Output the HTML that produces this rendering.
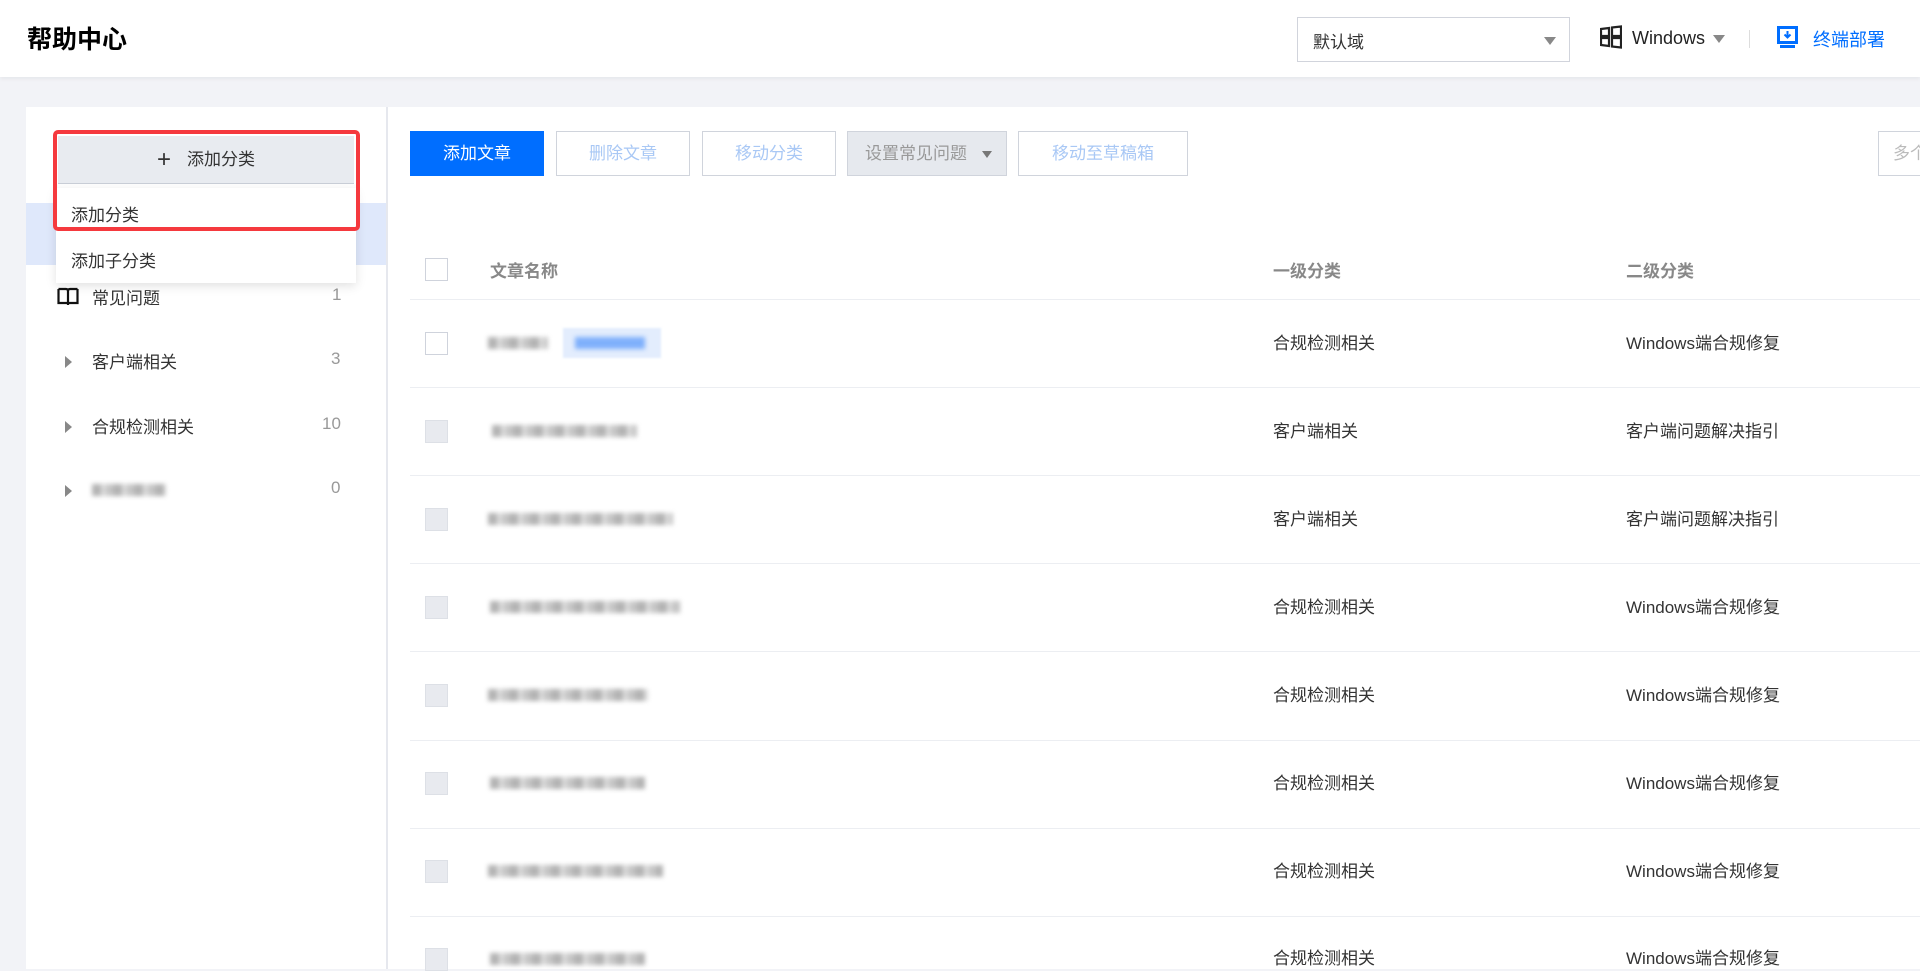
<!DOCTYPE html>
<html><head><meta charset="utf-8"><style>
*{box-sizing:border-box;margin:0;padding:0}
body{width:1920px;height:969px;overflow:hidden;background:#f2f3f7;font-family:"Liberation Sans","Noto Sans CJK SC",sans-serif;color:#333;font-size:17px;position:relative}
.abs{position:absolute}
.hdr{left:0;top:0;width:1920px;height:77px;background:#fff;box-shadow:0 2px 4px rgba(0,0,0,.05)}
.title{left:27px;top:20px;font-size:25px;font-weight:bold;color:#000}
.sel{left:1297px;top:17px;width:273px;height:45px;border:1px solid #d1d4dc;background:#fff}
.sel span{position:absolute;left:15px;top:10px}
.caret{width:0;height:0;border-left:6px solid transparent;border-right:6px solid transparent;border-top:8px solid #888}
.left{left:26px;top:107px;width:360px;height:862px;background:#fff}
.main{left:388px;top:107px;width:1532px;height:862px;background:#fff}
.vline{left:386px;top:107px;width:2px;height:862px;background:#e6e8ee}
.btn{top:131px;height:45px;border:1px solid #d0d4dc;background:#fff;color:#a9c8f5;text-align:center;line-height:43px;font-size:17px}
.cb{width:23px;height:23px;border:1px solid #cfd3dc;background:#fff}
.cbg{background:#e8eaef;border-color:#dde0e6}
.rowline{left:410px;width:1510px;height:1px;background:#eceef2}
.blur{filter:blur(2.5px);background:repeating-linear-gradient(90deg,#9a9a9a 0 9px,#cfcfcf 9px 14px,#b3b3b3 14px 21px);height:12px;opacity:.75}
.tx{font-size:17px;color:#333}
.tri{width:0;height:0;border-top:6px solid transparent;border-bottom:6px solid transparent;border-left:7px solid #888}
.cnt{color:#999;font-size:17px}
</style></head><body>
<div class="abs hdr"></div>
<div class="abs title">帮助中心</div>
<div class="abs sel"><span>默认域</span><div class="abs caret" style="left:246px;top:19px"></div></div>
<svg class="abs" style="left:1600px;top:25px" width="22" height="24" viewBox="0 0 22 24"><g fill="none" stroke="#222" stroke-width="2.2"><path d="M1 4 L9 3 V11 H1 Z"/><path d="M12 2.5 L21 1.5 V11 H12 Z"/><path d="M1 13 H9 V21 L1 20 Z"/><path d="M12 13 H21 V22.5 L12 21.5 Z"/></g></svg>
<div class="abs" style="left:1632px;top:28px;font-size:18px;color:#222">Windows</div>
<div class="abs caret" style="left:1713px;top:35px"></div>
<div class="abs" style="left:1749px;top:30px;width:1px;height:18px;background:#ddd"></div>
<svg class="abs" style="left:1777px;top:26px" width="21" height="22" viewBox="0 0 21 22"><rect x="1.5" y="1.5" width="18" height="15" fill="none" stroke="#006eff" stroke-width="3"/><rect x="3" y="19" width="15" height="3" fill="#006eff"/><path d="M10.5 5 V11 M7.5 8.5 L10.5 11.5 L13.5 8.5" stroke="#006eff" stroke-width="2" fill="none"/></svg>
<div class="abs" style="left:1813px;top:26px;color:#006eff;font-size:18px">终端部署</div>

<div class="abs left"></div>
<div class="abs vline"></div>
<div class="abs main"></div>

<div class="abs" style="left:26px;top:203px;width:360px;height:62px;background:#dfe8fb"></div>
<svg class="abs" style="left:57px;top:287px" width="22" height="20" viewBox="0 0 22 20"><path d="M1.5 2 H9 Q11 2 11 4 V18 M20.5 2 H13 Q11 2 11 4 M1.5 2 V16 H11 H20.5 V2" fill="none" stroke="#111" stroke-width="2.2"/></svg>
<div class="abs tx" style="left:92px;top:284px">常见问题</div><div class="abs cnt" style="left:332px;top:285px">1</div>
<div class="abs tri" style="left:65px;top:356px"></div>
<div class="abs tx" style="left:92px;top:348px">客户端相关</div><div class="abs cnt" style="left:331px;top:349px">3</div>
<div class="abs tri" style="left:65px;top:421px"></div>
<div class="abs tx" style="left:92px;top:413px">合规检测相关</div><div class="abs cnt" style="left:322px;top:414px">10</div>
<div class="abs tri" style="left:65px;top:485px"></div>
<div class="abs blur" style="left:92px;top:484px;width:74px"></div><div class="abs cnt" style="left:331px;top:478px">0</div>

<div class="abs" style="left:56px;top:188px;width:300px;height:95px;background:#fff;box-shadow:0 3px 10px rgba(0,0,0,.12)"></div>
<div class="abs tx" style="left:71px;top:201px">添加分类</div>
<div class="abs tx" style="left:71px;top:247px">添加子分类</div>
<div class="abs" style="left:58px;top:136px;width:296px;height:48px;background:#e8ebf0;border-bottom:1px solid #c8cdd6;text-align:center;line-height:47px;font-size:17px;color:#333"><span style="font-size:24px;vertical-align:-2px;margin-right:16px">+</span>添加分类</div>
<div class="abs" style="left:53px;top:130px;width:307px;height:101px;border:4px solid #f5393e;border-radius:5px"></div>

<div class="abs btn" style="left:410px;width:134px;background:#006eff;border-color:#006eff;color:#fff">添加文章</div>
<div class="abs btn" style="left:556px;width:134px">删除文章</div>
<div class="abs btn" style="left:702px;width:134px">移动分类</div>
<div class="abs btn" style="left:847px;width:160px;background:#e6e9ee;color:#999;text-align:left;padding-left:17px">设置常见问题<div class="abs caret" style="left:134px;top:19px;border-left-width:5px;border-right-width:5px;border-top-width:7px;border-top-color:#777"></div></div>
<div class="abs btn" style="left:1018px;width:170px">移动至草稿箱</div>
<div class="abs btn" style="left:1878px;width:60px;color:#bbb;text-align:left;padding-left:14px">多个</div>

<div class="abs cb" style="left:425px;top:258px"></div>
<div class="abs" style="left:490px;top:257px;color:#888;font-weight:bold;font-size:17px">文章名称</div>
<div class="abs" style="left:1273px;top:257px;color:#888;font-weight:bold;font-size:17px">一级分类</div>
<div class="abs" style="left:1626px;top:257px;color:#888;font-weight:bold;font-size:17px">二级分类</div>
<div class="abs rowline" style="top:299px"></div>

<div class="abs cb" style="left:425px;top:332px"></div>
<div class="abs blur" style="left:488px;top:337px;width:60px"></div>
<div class="abs" style="left:563px;top:328px;width:98px;height:30px;background:#e3edfd;filter:blur(1px)"></div>
<div class="abs" style="left:575px;top:337px;width:70px;height:12px;background:#7fb0fb;filter:blur(2.5px)"></div>
<div class="abs tx" style="left:1273px;top:329px">合规检测相关</div><div class="abs tx" style="left:1626px;top:329px">Windows端合规修复</div>
<div class="abs rowline" style="top:387px"></div>

<div class="abs cb cbg" style="left:425px;top:420px"></div><div class="abs blur" style="left:492px;top:425px;width:145px"></div>
<div class="abs tx" style="left:1273px;top:417px">客户端相关</div><div class="abs tx" style="left:1626px;top:417px">客户端问题解决指引</div>
<div class="abs rowline" style="top:475px"></div>

<div class="abs cb cbg" style="left:425px;top:508px"></div><div class="abs blur" style="left:488px;top:513px;width:185px"></div>
<div class="abs tx" style="left:1273px;top:505px">客户端相关</div><div class="abs tx" style="left:1626px;top:505px">客户端问题解决指引</div>
<div class="abs rowline" style="top:563px"></div>

<div class="abs cb cbg" style="left:425px;top:596px"></div><div class="abs blur" style="left:490px;top:601px;width:190px"></div>
<div class="abs tx" style="left:1273px;top:593px">合规检测相关</div><div class="abs tx" style="left:1626px;top:593px">Windows端合规修复</div>
<div class="abs rowline" style="top:651px"></div>

<div class="abs cb cbg" style="left:425px;top:684px"></div><div class="abs blur" style="left:488px;top:689px;width:160px"></div>
<div class="abs tx" style="left:1273px;top:681px">合规检测相关</div><div class="abs tx" style="left:1626px;top:681px">Windows端合规修复</div>
<div class="abs rowline" style="top:740px"></div>

<div class="abs cb cbg" style="left:425px;top:772px"></div><div class="abs blur" style="left:490px;top:777px;width:155px"></div>
<div class="abs tx" style="left:1273px;top:769px">合规检测相关</div><div class="abs tx" style="left:1626px;top:769px">Windows端合规修复</div>
<div class="abs rowline" style="top:828px"></div>

<div class="abs cb cbg" style="left:425px;top:860px"></div><div class="abs blur" style="left:488px;top:865px;width:175px"></div>
<div class="abs tx" style="left:1273px;top:857px">合规检测相关</div><div class="abs tx" style="left:1626px;top:857px">Windows端合规修复</div>
<div class="abs rowline" style="top:916px"></div>

<div class="abs cb cbg" style="left:425px;top:948px"></div><div class="abs blur" style="left:490px;top:953px;width:155px"></div>
<div class="abs tx" style="left:1273px;top:944px">合规检测相关</div><div class="abs tx" style="left:1626px;top:944px">Windows端合规修复</div>
</body></html>
